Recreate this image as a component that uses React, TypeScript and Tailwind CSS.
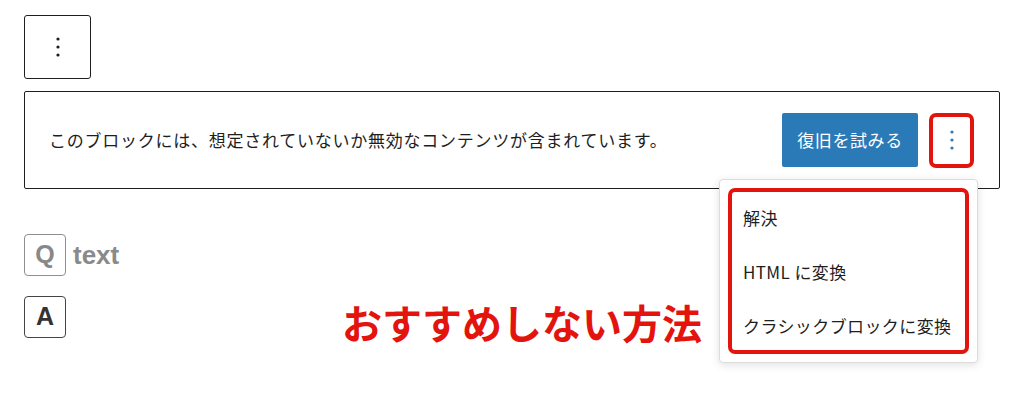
const jp = "font-['Noto_Sans_CJK_JP',sans-serif]";

const MoreVertical = ({ className }: { className?: string }) => (
  <svg viewBox="0 0 24 24" width="24" height="24" className={className} fill="currentColor">
    <circle cx="12" cy="4" r="1.6" />
    <circle cx="12" cy="12" r="1.6" />
    <circle cx="12" cy="20" r="1.6" />
  </svg>
);

const menuItems = ["解決", "HTML に変換", "クラシックブロックに変換"];

export default function App() {
  return (
    <div className={`relative h-[402px] w-[1024px] bg-white pl-6 pt-[15px] text-[#1e1e1e] ${jp}`}>
      <button className="flex h-16 w-[67px] items-center justify-center rounded-[3px] border border-[#1e1e1e] bg-white">
        <MoreVertical className="h-[24px] w-[24px] text-[#1e1e1e]" />
      </button>

      <div className="mt-3 flex h-[98px] w-[976px] items-center justify-between rounded-[2px] border border-[#1e1e1e] pl-6 pr-[25px]">
        <p className="text-[17px] leading-6 tracking-[0.75px]">
          このブロックには、想定されていないか無効なコンテンツが含まれています。
        </p>
        <div className="flex items-center gap-[11px]">
          <button className="h-[54px] w-[136px] rounded-[2px] bg-[#2b7ab8] text-[17px] tracking-[0.6px] text-white">
            復旧を試みる
          </button>
          <button className="flex h-[55px] w-[45px] items-center justify-center rounded-[7px] border-4 border-[#e3140e] bg-white">
            <MoreVertical className="h-[24px] w-[24px] text-[#2b7ab8]" />
          </button>
        </div>
      </div>

      <div className="mt-[45px] flex flex-col gap-5 font-['Liberation_Sans',sans-serif]">
        <div className="flex items-center gap-[7px]">
          <span className="flex h-[42px] w-[42px] items-center justify-center rounded-[4px] border border-[#8f8f8f] text-[25px] font-bold text-[#888]">
            Q
          </span>
          <span className="text-[26px] font-bold text-[#8a8a8a]">text</span>
        </div>
        <span className="flex h-[42px] w-[42px] items-center justify-center rounded-[4px] border border-[#444] text-[25px] font-bold text-[#333]">
          A
        </span>
      </div>

      <p className="absolute left-[342px] top-[302px] text-[40px] font-bold leading-none text-[#e3140e]">
        おすすめしない方法
      </p>

      <div className="absolute left-[719px] top-[179px] h-[184px] w-[259px] rounded-[4px] border border-[#dcdcdc] bg-white p-2 shadow-[0_2px_8px_rgba(0,0,0,0.12)]">
        <div className="flex h-full flex-col gap-[30px] rounded-[7px] border-4 border-[#e3140e] pl-[11px] pt-[14px]">
          {menuItems.map((item) => (
            <div key={item} className="text-[17px] leading-6 tracking-[0.4px] text-[#1e1e1e]">
              {item}
            </div>
          ))}
        </div>
      </div>
    </div>
  );
}
